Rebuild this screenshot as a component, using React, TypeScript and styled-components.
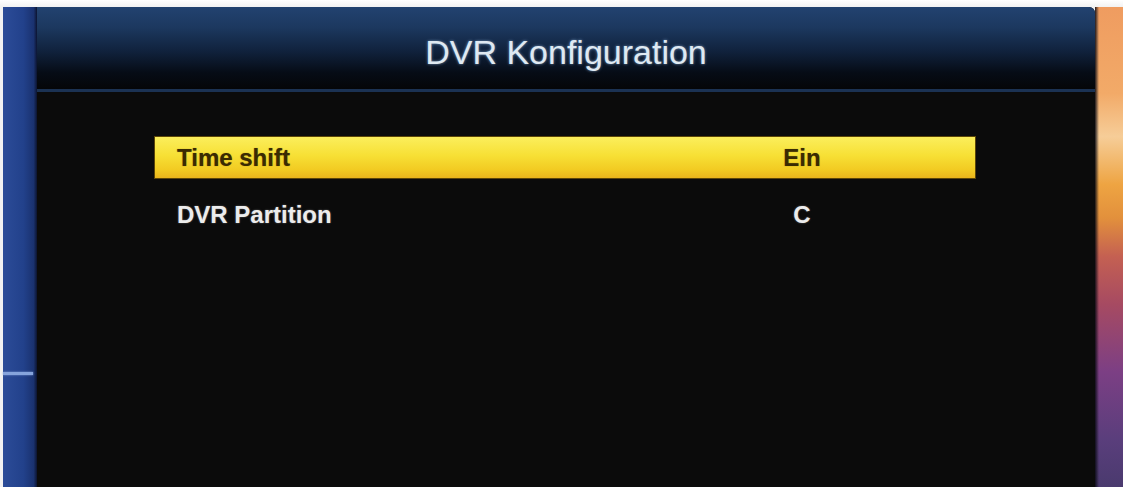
import React from 'react';
import styled, { createGlobalStyle } from 'styled-components';

const GlobalStyle = createGlobalStyle`
  html, body {
    margin: 0;
    padding: 0;
    background: #ffffff;
  }
  body {
    font-family: "Liberation Sans", Arial, sans-serif;
  }
`;

const Screen = styled.div`
  width: 1123px;
  height: 487px;
  box-sizing: border-box;
  padding: 7px 0 0 3px;
  display: flex;
  overflow: hidden;
  background: linear-gradient(#ffffff, #f2f2f2 7px);
`;

const LeftBand = styled.div`
  width: 34px;
  flex-shrink: 0;
  display: flex;
  flex-direction: column;
  padding-top: 365px;
  box-sizing: border-box;
  background: linear-gradient(90deg, #2c4c98 0%, #22418b 60%, #1a3270 90%, #0c1430 100%);
`;

const BandMark = styled.div`
  width: 30px;
  height: 3px;
  background: #86a4dc;
  box-shadow: 0 0 2px #86a4dc;
`;

const Panel = styled.div`
  flex: 1;
  display: flex;
  flex-direction: column;
  background: #0b0b0b;
  border-top-right-radius: 6px;
`;

const Header = styled.header`
  height: 85px;
  box-sizing: border-box;
  padding-top: 28px;
  text-align: center;
  border-top-right-radius: 6px;
  border-bottom: 3px solid #1b3253;
  background: linear-gradient(#224270 0%, #1c385f 25%, #10213b 55%, #060c16 80%, #050608 100%);
`;

const Title = styled.h1`
  margin: 0;
  font-size: 34px;
  line-height: 34px;
  font-weight: normal;
  color: #dfe9f2;
  text-shadow: 0 0 3px rgba(140, 175, 215, 0.8);
`;

const Menu = styled.div`
  display: flex;
  flex-direction: column;
  gap: 16px;
  padding: 45px 0 0 118px;
`;

const Row = styled.div<{ $selected?: boolean }>`
  width: 820px;
  height: 41px;
  display: grid;
  grid-template-columns: 587px 120px 1fr;
  font-size: 24px;
  font-weight: bold;
  line-height: 41px;
  color: ${p => (p.$selected ? '#3a2b02' : '#ececec')};
  text-shadow: ${p => (p.$selected ? '0 0 1px rgba(90, 60, 0, 0.6)' : '0 0 2px rgba(200, 200, 200, 0.5)')};
  background: ${p =>
    p.$selected
      ? 'linear-gradient(#fbee5c 0%, #f7e035 45%, #f2cb22 80%, #eab51c 100%)'
      : 'transparent'};
  box-shadow: ${p => (p.$selected ? '0 0 0 1px #5c4608' : 'none')};
`;

const Label = styled.span`
  padding-left: 22px;
`;

const Value = styled.span`
  text-align: center;
`;

const RightBand = styled.div`
  width: 28px;
  flex-shrink: 0;
  background:
    linear-gradient(90deg, rgba(10, 10, 20, 0.9) 0px, rgba(10, 10, 20, 0) 4px),
    linear-gradient(
      #ef9c60 0%,
      #f2aa68 18%,
      #f6cd98 27%,
      #eea442 37%,
      #e2903c 44%,
      #c46052 52%,
      #a64a62 62%,
      #7c3f84 76%,
      #5a3e7c 90%,
      #4a3a6e 100%
    );
`;

const items = [
  { label: 'Time shift', value: 'Ein' },
  { label: 'DVR Partition', value: 'C' },
];

const App = () => {
  return (
    <>
      <GlobalStyle />
      <Screen>
        <LeftBand>
          <BandMark />
        </LeftBand>
        <Panel>
          <Header>
            <Title>DVR Konfiguration</Title>
          </Header>
          <Menu>
            {items.map((item, i) => (
              <Row key={item.label} $selected={i === 0}>
                <Label>{item.label}</Label>
                <Value>{item.value}</Value>
              </Row>
            ))}
          </Menu>
        </Panel>
        <RightBand />
      </Screen>
    </>
  );
};

export default App;
